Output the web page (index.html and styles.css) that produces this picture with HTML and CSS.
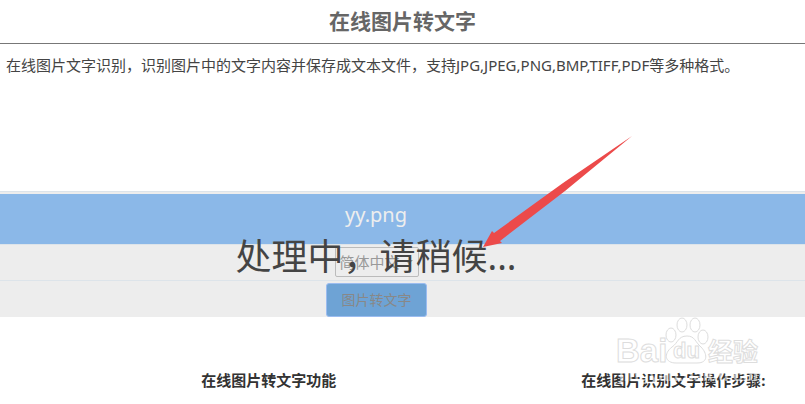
FILE: index.html
```html
<!DOCTYPE html>
<html lang="zh-CN">
<head>
  <meta charset="UTF-8">
  <meta name="viewport" content="width=device-width, initial-scale=1.0">
  <title>在线图片转文字</title>
  <link rel="stylesheet" href="styles.css">
</head>
<body>
<header class="page-header">
  <h1>在线图片转文字</h1>
</header>

<main>
  <p class="intro">在线图片文字识别，识别图片中的文字内容并保存成文本文件，支持JPG,JPEG,PNG,BMP,TIFF,PDF等多种格式。</p>

  <form class="ocr-form">
    <div class="file-row">
      <div class="file-name">yy.png</div>
    </div>
    <div class="form-row">
      <div class="select-wrap">
        <select class="language" aria-label="识别语言" disabled>
          <option>简体中文</option>
        </select>
      </div>
    </div>
    <div class="form-row">
      <button type="submit" class="submit-button" disabled>图片转文字</button>
    </div>

    <!-- 处理中提示 -->
    <div class="loading" role="status">处理中，请稍候...</div>

    <svg class="arrow" width="150" height="113" viewBox="0 0 150 113" aria-hidden="true">
      <path d="M149 1 L80 48 L11 98 L9 96 L0 112 L19 108 L17 106 L82 56 Z" fill="#ec4a4a"/>
    </svg>
  </form>

  <section class="columns">
    <h2>在线图片转文字功能</h2>
    <h2>在线图片识别文字操作步骤:</h2>

    <!-- 水印 -->
    <svg class="watermark" width="150" height="74" viewBox="0 0 150 74" aria-hidden="true">
      <g class="outline">
        <text x="0" y="47" font-size="33">Bai</text>
        <ellipse cx="55" cy="20" rx="5" ry="7"/>
        <ellipse cx="66" cy="10" rx="5" ry="7"/>
        <ellipse cx="79" cy="10" rx="5" ry="7"/>
        <ellipse cx="87" cy="22" rx="5" ry="7"/>
        <path d="M71 21 C62 21 62 28 56 32 C47 39 49 48 60 48 L81 48 C93 48 91 38 85 32 C79 27 79 21 71 21 Z"/>
        <text x="57" y="43" font-size="22">du</text>
        <text x="92" y="46" font-size="25">经验</text>
      </g>
      <text class="domain" x="3" y="66" font-size="17">jingyan.baidu.com</text>
    </svg>
  </section>
</main>
</body>
</html>
```

FILE: styles.css
```css
* {
  box-sizing: border-box;
}

body {
  margin: 0;
  font-family: "Noto Sans", "Noto Sans CJK SC", sans-serif;
  font-size: 15px;
  line-height: 20px;
  color: #444;
  background-color: #fff;
}

h1, h2, p {
  margin: 0;
}

.page-header {
  padding: 8px 0;
  border-bottom: 1px solid #777;
}

h1 {
  font-size: 21px;
  line-height: 27px;
  text-align: center;
  color: #666;
}

.intro {
  padding: 11px 6px;
}

.ocr-form {
  position: relative;
  margin-top: 105px;
  border-top: 1px solid #dde4ea;
  background-color: #ededed;
}

.file-row {
  padding-top: 2px;
}

.file-name {
  height: 50px;
  padding-right: 53px;
  font-size: 20px;
  line-height: 42px;
  text-align: center;
  color: #eee;
  background-color: #8bb8e8;
}

.form-row {
  display: flex;
  justify-content: center;
  padding: 2px 52px 0 0;
  border-top: 1px solid #dde4ea;
}

.select-wrap {
  position: relative;
  margin-bottom: 3px;
}

.select-wrap::after {
  content: "";
  position: absolute;
  top: 13px;
  right: 6px;
  border: 4px solid transparent;
  border-top-color: #999;
}

.language {
  display: block;
  appearance: none;
  width: 84px;
  height: 30px;
  padding: 0 4px;
  font: inherit;
  color: #999;
  background-color: #ededed;
  border: 1px solid #bbb;
  border-radius: 2px;
  opacity: 1;
}

.submit-button {
  width: 101px;
  height: 34px;
  font: inherit;
  font-size: 14px;
  color: #888;
  background-color: #6ea3d5;
  border: 1px solid #9bbcf0;
  border-radius: 3px;
}

.loading {
  position: absolute;
  top: 40px;
  left: 0;
  right: 53px;
  font-size: 36px;
  line-height: 50px;
  text-align: center;
  color: #444;
}

.arrow {
  position: absolute;
  top: -57px;
  left: 60%;
}

.columns {
  position: relative;
  display: grid;
  grid-template-columns: 380px 1fr;
  padding: 53px 0 24px 25%;
}

h2 {
  font-size: 15px;
  line-height: 20px;
  color: #333;
}

.watermark {
  position: absolute;
  right: 39px;
  top: -2px;
  overflow: visible;
  font-family: "Liberation Sans", "Noto Sans CJK SC", sans-serif;
  font-weight: bold;
}

.outline {
  fill: #fff;
  stroke: #ddd;
}

.domain {
  fill: #fff;
  fill-opacity: 0.6;
}
```
